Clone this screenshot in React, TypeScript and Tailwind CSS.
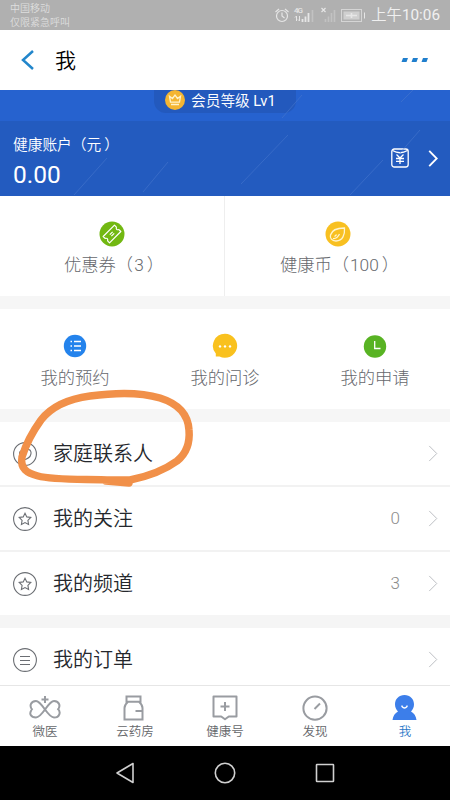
import type { ReactNode } from "react";

function classNames(...classes: string[]) {
  return classes.filter(Boolean).join(" ");
}

const Chevron = ({ className }: { className: string }) => (
  <svg viewBox="0 0 10 18" fill="none" stroke="currentColor" className={className}>
    <path d="M1 1l8 8-8 8" />
  </svg>
);

const Star = () => (
  <svg viewBox="0 0 24 24" fill="none" stroke="#6b6e73" strokeWidth="1.1" className="size-6">
    <circle cx="12" cy="12" r="11.4" />
    <path d="M12 6.2l1.8 3.7 4 .6-2.9 2.9.7 4.1-3.6-1.9-3.6 1.9.7-4.1-2.9-2.9 4-.6z" />
  </svg>
);

const Heart = () => (
  <svg viewBox="0 0 24 24" fill="none" stroke="#6b6e73" strokeWidth="1.1" className="size-6">
    <circle cx="12" cy="12" r="11.4" />
    <path d="M12.500 17.500c3.500-1.500 6-4.500 5.500-7.500-.5-3.200-4.500-3.700-6-.5-2.500-2.500-6-.5-5.500 2.500.4 2.600 3.500 4.500 6 5.500z" />
  </svg>
);

const Lines = () => (
  <svg viewBox="0 0 24 24" fill="none" stroke="#6b6e73" strokeWidth="1.1" className="size-6">
    <circle cx="12" cy="12" r="11.4" />
    <path d="M7 8.500h10M7 12.500h10M7 16.500h10" />
  </svg>
);

const assets = [
  {
    name: "优惠券（",
    count: 3,
    icon: (
      <svg viewBox="0 0 26 26" fill="none" stroke="#fff" className="size-[26px]">
        <circle cx="13" cy="13" r="12.500" fill="#72b812" stroke="none" />
        <g transform="rotate(-45 13 13)" strokeWidth="1.200" strokeLinejoin="round">
          <path d="M5 8.500h16v2.700q-2.800 1.800 0 3.600v2.700H5v-2.700q2.800-1.800 0-3.600z" />
          <path d="M11 11.900h4M11 14.100h4" />
        </g>
      </svg>
    ),
  },
  {
    name: "健康币（",
    count: 100,
    icon: (
      <svg viewBox="0 0 26 26" fill="none" stroke="#fff4cf" strokeWidth="1.300" className="size-[26px]">
        <circle cx="13" cy="13" r="12.500" fill="#f8c021" stroke="none" />
        <path d="M19.500 7c.5 6.500-1.700 13-8.500 13-4.300 0-6.300-2.800-5.500-6C6.800 9 12 7 19.500 7z" />
        <path d="M8 17.500q4 .5 6.500-4.500M9.500 15.500q1.500-1 2-2" />
      </svg>
    ),
  },
];

const services = [
  {
    name: "我的预约",
    icon: (
      <svg viewBox="0 0 26 26" fill="none" stroke="#fff" strokeWidth="1.300" className="size-[26px]">
        <circle cx="13" cy="13" r="11.200" fill="#2483ec" stroke="none" />
        <path d="M8.500 8.500h1.500M8.500 13h1.500M8.500 17.500h1.500M12 8.500h7M12 13h7M12 17.500h7" />
      </svg>
    ),
  },
  {
    name: "我的问诊",
    icon: (
      <svg viewBox="0 0 26 26" className="size-[26px]">
        <path d="M13 .8a12.300 12 0 1 1-5.500 22.800H3.800v-3A12 12 0 0 1 13 .8z" fill="#f9c11e" />
        <g fill="#fff">
          <circle cx="8" cy="13.400" r="1.200" />
          <circle cx="13" cy="13.400" r="1.200" />
          <circle cx="18" cy="13.400" r="1.200" />
        </g>
      </svg>
    ),
  },
  {
    name: "我的申请",
    icon: (
      <svg viewBox="0 0 26 26" fill="none" stroke="#fff" strokeWidth="1.300" className="size-[26px]">
        <circle cx="13" cy="13.500" r="11.200" fill="#58b323" stroke="none" />
        <path d="M12.700 8v7.500h5.800" />
      </svg>
    ),
  },
];

const tabs = [
  {
    name: "微医",
    icon: (
      <svg viewBox="0 0 32 26" fill="none" stroke="#999ca1" strokeWidth="2" className="h-[26px] w-8">
        <path d="M16 1v7M12.500 4.500h7" />
        <path d="M3.500 15C0 11.500 1.500 6 7 6c6 0 11.500 16.500 18 16.500 5.500 0 7.500-5.500 3.500-9M28.500 15C32 11.500 30.500 6 25 6 19 6 13.500 22.500 7 22.500c-5.500 0-7-4-4.500-7.500" />
      </svg>
    ),
  },
  {
    name: "云药房",
    icon: (
      <svg viewBox="0 0 32 26" fill="none" stroke="#999ca1" strokeWidth="2" className="h-[26px] w-8">
        <path d="M7.500 1.500h14v5.300h-14zM9 6.800C6.500 9 5.500 10 5.500 13v11.500h18V13c0-3-1-4-3.500-6.200M16.500 16h7" />
      </svg>
    ),
  },
  {
    name: "健康号",
    icon: (
      <svg viewBox="0 0 32 26" fill="none" stroke="#999ca1" strokeWidth="2" className="h-[26px] w-8">
        <path d="M4.500 1.500h23v20h-7.700L16 24.300l-3.800-2.800H4.500zM16 7v9M11.500 11.500h9" strokeLinejoin="round" />
      </svg>
    ),
  },
  {
    name: "发现",
    icon: (
      <svg viewBox="0 0 32 26" fill="none" stroke="#999ca1" strokeWidth="2" className="h-[26px] w-8">
        <circle cx="16" cy="13.200" r="11.600" />
        <path d="M15.500 14l5.500-5.500" />
      </svg>
    ),
  },
  {
    name: "我",
    active: true,
    icon: (
      <svg viewBox="0 0 32 26" className="h-[26px] w-8">
        <path
          d="M15.500 0c5.500 0 9.500 4 9.500 9.300 0 3-1.200 5.400-3 7.200 3 1.500 5 4.500 5.500 8.500H3.500c.5-4 2.500-7 5.500-8.500-1.800-1.800-3-4.200-3-7.200C6 4 10 0 15.500 0z"
          fill="#3c7eea"
        />
        <path d="M13 10.500v1q2.500 3 5 0v-1" fill="none" stroke="#fff" strokeWidth="1.400" />
      </svg>
    ),
  },
];

function Row({ icon, name, count, className }: { icon: ReactNode; name: string; count?: string; className: string }) {
  return (
    <li className={classNames("flex items-center pl-[13px] pr-3", className)}>
      {icon}
      <span className="ml-4 flex-1 text-xl leading-6 text-[#25282d]">{name}</span>
      <span className="text-[17px] text-[#8c8c8c]">{count}</span>
      <Chevron className="ml-7 h-[17px] w-[10px] text-[#b9bbc0]" />
    </li>
  );
}

export default function App() {
  return (
    <div className="relative flex h-[800px] w-[450px] flex-col overflow-hidden bg-white font-['Roboto','Noto_Sans_CJK_SC',sans-serif] font-[350]">
      <div className="flex h-[30px] shrink-0 items-center justify-between bg-[#b0b0b0] pl-2.5 pr-[10px] text-[#dedede]">
        <div className="pt-0.5 text-[10px] leading-[14px]">
          <div>中国移动</div>
          <div>仅限紧急呼叫</div>
        </div>
        <div className="flex items-center">
          <svg viewBox="0 0 98 20" fill="none" stroke="#e6e6e6" className="mr-1.5 h-5 w-[98px]">
            <circle cx="15" cy="11" r="5.500" strokeWidth="1.200" />
            <path d="M15 7.500V11l2.500 2M8.500 7L12 4M21.500 7L18 4" strokeWidth="1.200" />
            <text x="27" y="8" fontSize="8" fill="#e6e6e6" stroke="none" fontWeight="500" textLength="9">4G</text>
            <path d="M29.500 11v5M32.500 11v5M28 12.500l1.500-1.500M31 14.500l1.500 1.500" />
            <path d="M35.500 14v3M38.500 11.500V17M41.500 8v9" strokeWidth="1.800" />
            <path d="M45.500 5v12M58.500 14v3M61.500 11.500V17M64.500 8v9M67.500 5v12" stroke="#c2c2c2" strokeWidth="1.600" />
            <path d="M54.500 3l4 4M58.500 3l-4 4" strokeWidth="1.200" />
            <rect x="74.500" y="4.500" width="20" height="12" stroke="#d5d5d5" />
            <rect x="76.500" y="6.500" width="16" height="8" fill="#cfcfcf" stroke="none" />
            <path d="M79 10.500h11M84.500 8v5" strokeWidth="1.600" />
            <path d="M97.500 7.500v6" />
          </svg>
          <span className="text-[15.300px] leading-5 text-[#f0f0f0]">
            上午<span className="font-normal">10:06</span>
          </span>
        </div>
      </div>

      <header className="flex h-[60px] shrink-0 items-center pl-[21px] pr-[21px]">
        <svg viewBox="0 0 14 20" fill="none" stroke="#2286cb" strokeWidth="2.500" className="h-5 w-3.5">
          <path d="M12 1L2 10l10 9" />
        </svg>
        <h1 className="ml-5 flex-1 pt-0.5 text-[21px] leading-7 text-black">我</h1>
        <svg viewBox="0 0 28 6" fill="#207fcd" className="h-1.5 w-7">
          <path d="M2 1h5L5.500 5H.5zM12 1h5l-1.500 4h-5zM22 1h5l-1.500 4h-5z" />
        </svg>
      </header>

      <section className="relative h-[106px] shrink-0 bg-[#235bbf] text-white">
        <div className="flex h-[31px] justify-center bg-[#2662cf]">
          <div className="flex h-[23px] w-[142px] rounded-b-xl bg-[#2359bd] pl-[11px]">
            <svg viewBox="0 0 20 20" fill="none" stroke="#fff3cb" strokeWidth="1.300" className="size-5">
              <circle cx="10" cy="10" r="10" fill="#f4b532" stroke="none" />
              <path d="M4.500 6.200l3 2.300L10 5l2.500 3.500 3-2.300-1 6h-9zM6 14.500h8" />
            </svg>
            <span className="ml-1.5 whitespace-nowrap text-[14.700px] leading-[22px]">
              会员等级 <span className="font-normal">Lv1</span>
            </span>
          </div>
        </div>
        <svg viewBox="0 0 450 106" fill="none" stroke="#4979cd" className="absolute inset-0 h-[106px] w-[450px]">
          <path d="M74 105l33-37M143 102l25-30M241 94l47-49M282 28l20-23M350 105l33-35M400 63l20-23M401 12l12-12" opacity=".55" />
        </svg>
        <div className="flex items-center justify-between pl-[13px] pr-3">
          <div>
            <div className="mt-[13px] flex text-[14.700px] leading-[22px]">
              健康账户（元<span className="ml-[3px]">）</span>
            </div>
            <div className="mt-1 text-[24.500px] font-normal leading-[30px]">0.00</div>
          </div>
          <div className="mt-[5px] flex items-center">
            <svg viewBox="0 0 18 20" fill="none" stroke="#fff" strokeWidth="1.300" className="h-5 w-[18px]">
              <rect x=".8" y="1" width="16.400" height="18" rx="2.500" />
              <path d="M1.500 2.500q7.500 4.500 15 0M5.500 6.500L9 10l3.500-3.500M9 10v6M5 10.500h8M5 13.300h8" />
            </svg>
            <Chevron className="ml-[19px] h-[17px] w-[10px] stroke-2 text-white" />
          </div>
        </div>
      </section>

      <section className="grid h-[100px] shrink-0 grid-cols-2">
        {assets.map((item, idx) => (
          <div
            key={item.name}
            className={classNames("flex flex-col items-center pt-[25px]", idx === 0 ? "border-r border-[#eeeeee]" : "")}
          >
            {item.icon}
            <span className="mt-[5px] flex whitespace-nowrap text-[17.300px] font-light leading-[26px] text-[#66686d]">
              {item.name}
              <span className="ml-px">{item.count}</span>
              <span className="-mr-1 ml-[3px]">）</span>
            </span>
          </div>
        ))}
      </section>

      <section className="grid h-[126px] shrink-0 grid-cols-3 border-y-[13px] border-[#f6f6f6]">
        {services.map((item) => (
          <div key={item.name} className="flex flex-col items-center pt-6">
            {item.icon}
            <span className="mt-1.5 text-[17.300px] font-light leading-[26px] text-[#66686d]">{item.name}</span>
          </div>
        ))}
      </section>

      <ul className="shrink-0">
        <Row icon={<Heart />} name="家庭联系人" className="h-[65px] border-b-2 border-[#f2f2f2]" />
        <Row icon={<Star />} name="我的关注" count="0" className="h-[65px] border-b-2 border-[#f2f2f2]" />
        <Row icon={<Star />} name="我的频道" count="3" className="h-[63px]" />
        <Row icon={<Lines />} name="我的订单" className="h-[70px] border-t-[13px] border-[#f5f5f5] pt-1.5" />
      </ul>

      <nav className="grid h-[61px] shrink-0 grid-cols-5 border-t border-[#e6e6e6]">
        {tabs.map((tab) => (
          <div key={tab.name} className="flex flex-col items-center pt-[9px]">
            {tab.icon}
            <span
              className={classNames(
                "mt-0.5 text-[12.500px] leading-[18px]",
                tab.active ? "text-[#2b78c8]" : "text-[#65676b]"
              )}
            >
              {tab.name}
            </span>
          </div>
        ))}
      </nav>

      <div className="flex flex-1 items-center justify-center bg-black">
        <svg viewBox="0 0 220 24" fill="none" stroke="#d0d0d0" strokeWidth="1.600" className="h-6 w-[220px]">
          <path d="M18 2.500v19L2 12z" strokeLinejoin="round" />
          <circle cx="110" cy="12" r="9.700" />
          <rect x="201.500" y="3.500" width="17" height="17" rx=".5" />
        </svg>
      </div>

      {/* hand-drawn marker around the first row */}
      <svg viewBox="0 0 450 800" fill="none" stroke="#f19049" className="pointer-events-none absolute inset-0 h-[800px] w-[450px]">
        <path
          d="M129 483L106 481M112 480L130 480C150 476 166 469 177 461C187 453 190 442 189 430C188 413 176 403 160 398C140 392 112 393 90 396C68 399 51 407 41 420C33 431 26 444 22 457C20 469 27 473 38 476C52 480 78 479 112 480"
          strokeWidth="7.500"
          strokeLinecap="round"
          strokeLinejoin="round"
        />
      </svg>
    </div>
  );
}
